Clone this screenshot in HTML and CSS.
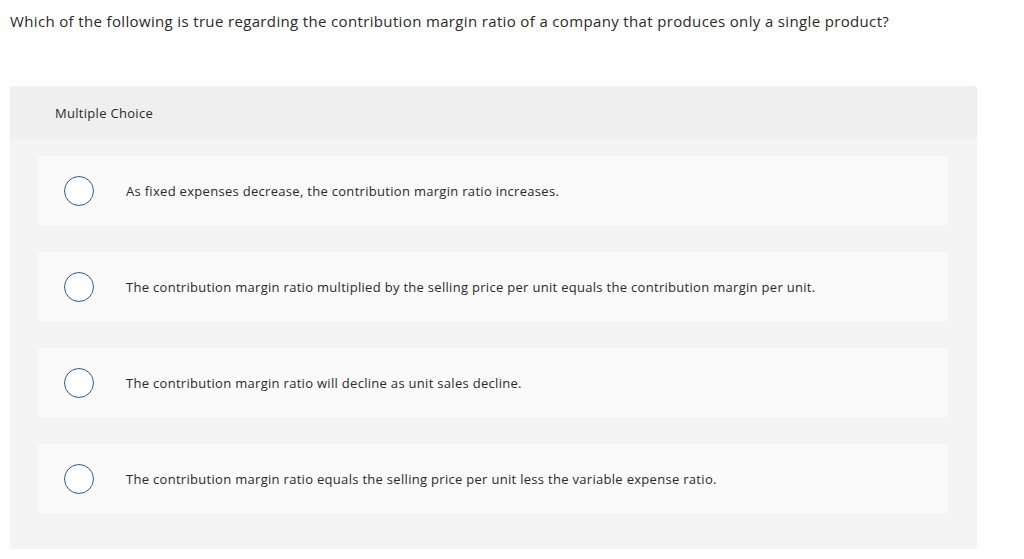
FILE: index.html
```html
<!DOCTYPE html>
<html>
<head>
<meta charset="utf-8">
<link rel="stylesheet" href="styles.css">
</head>
<body>
<p class="question">Which of the following is true regarding the contribution margin ratio of a company that produces only a single product?</p>
<div class="panel">
  <div class="panel-head">Multiple Choice</div>
  <div class="panel-body">
    <div class="option"><span class="radio"></span><span class="label">As fixed expenses decrease, the contribution margin ratio increases.</span></div>
    <div class="option"><span class="radio"></span><span class="label">The contribution margin ratio multiplied by the selling price per unit equals the contribution margin per unit.</span></div>
    <div class="option"><span class="radio"></span><span class="label">The contribution margin ratio will decline as unit sales decline.</span></div>
    <div class="option"><span class="radio"></span><span class="label">The contribution margin ratio equals the selling price per unit less the variable expense ratio.</span></div>
  </div>
</div>
</body>
</html>
```

FILE: styles.css
```css
html, body {
  margin: 0;
  padding: 0;
  background: #ffffff;
  font-family: "Open Sans", "Liberation Sans", sans-serif;
  color: #2a2a2a;
  font-variant-ligatures: none;
}
.question {
  margin: 0;
  padding: 11px 0 0 10px;
  font-size: 15px;
  line-height: 20px;
  height: 20px;
  letter-spacing: 0.35px;
}
.panel {
  margin: 55px 0 0 10px;
  width: 967px;
  border-radius: 4px 4px 0 0;
  overflow: hidden;
  background: #f4f4f4;
}
.panel-head {
  height: 53px;
  background: #efefef;
  display: flex;
  align-items: center;
  padding-left: 45px;
  font-size: 13px;
  letter-spacing: 0.3px;
}
.panel-body {
  padding: 17px 29px 36px 28px;
  display: flex;
  flex-direction: column;
  gap: 27px;
}
.option {
  height: 69px;
  background: #fafafa;
  border-radius: 3px;
  display: flex;
  align-items: center;
  padding-left: 26px;
  font-size: 13px;
  letter-spacing: 0.3px;
}
.radio {
  width: 28px;
  height: 28px;
  border: 1.3px solid #2b5d8e;
  border-radius: 50%;
  background: #ffffff;
  flex: none;
}
.label {
  margin-left: 32px;
}
```
